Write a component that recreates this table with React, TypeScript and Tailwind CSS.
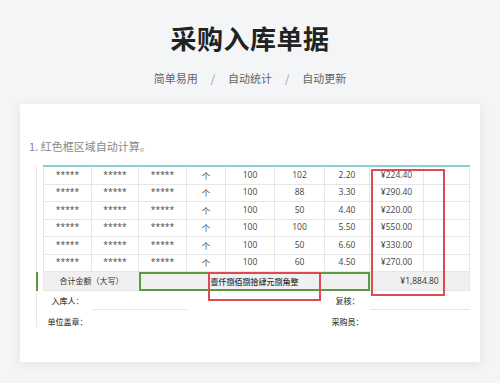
const GRID = 'grid grid-cols-[49px_47px_48px_39px_49px_50px_45px_54px_46px]'

const ROWS: { qty: string; price: string; amount: string }[] = [
  { qty: '102', price: '2.20', amount: '¥224.40' },
  { qty: '88', price: '3.30', amount: '¥290.40' },
  { qty: '50', price: '4.40', amount: '¥220.00' },
  { qty: '100', price: '5.50', amount: '¥550.00' },
  { qty: '50', price: '6.60', amount: '¥330.00' },
  { qty: '60', price: '4.50', amount: '¥270.00' },
]

const cell = 'flex items-center justify-center border-r border-b border-[#e6e6e6] h-[17.5px]'

export default function App() {
  return (
    <div
      className="min-h-[383px] w-[500px] bg-[#f4f5f7] flex flex-col items-center"
      style={{ fontFamily: '"Open Sans", "Noto Sans CJK SC", sans-serif' }}
    >
      <h1 className="mt-[22px] text-[26px] leading-[32px] font-bold text-[#222] tracking-[0.5px]" style={{ fontFamily: '"Noto Sans CJK SC", sans-serif' }}>
        采购入库单据
      </h1>
      <div className="mt-[16px] flex items-center text-[11px] leading-[16px] text-[#666]" style={{ fontFamily: '"Noto Sans CJK SC", sans-serif' }}>
        <span>简单易用</span>
        <span className="mx-[13px] text-[#999]">/</span>
        <span>自动统计</span>
        <span className="mx-[13px] text-[#999]">/</span>
        <span>自动更新</span>
      </div>

      <div className="relative mt-[18px] w-[460px] h-[258px] bg-white shadow-[0_2px_12px_rgba(0,0,0,0.08)] pt-[35px]">
        <p className="pl-[9px] text-[11px] leading-[14px] text-[#888]" style={{ fontFamily: '"Noto Sans CJK SC", sans-serif' }}>
          1. 红色框区域自动计算。
        </p>

        <div className="mt-[12px] ml-[16px] text-[8.5px] text-[#444]">
          {ROWS.map((r, i) => (
            <div key={i} className="flex">
              <div className="w-[7px] border-l border-[#e8e8e8]" />
              <div className={`${GRID} ${i === 0 ? 'border-t-2 border-[#8dcfd0]' : ''}`}>
                <div className={`${cell} border-l`}>*****</div>
                <div className={cell}>*****</div>
                <div className={cell}>*****</div>
                <div className={cell} style={{ fontFamily: '"Noto Sans CJK SC", sans-serif' }}>个</div>
                <div className={cell}>100</div>
                <div className={cell}>{r.qty}</div>
                <div className={cell}>{r.price}</div>
                <div className={cell}>{r.amount}</div>
                <div className={cell} />
              </div>
            </div>
          ))}

          <div className="flex">
            <div className="w-[7px] border-l-2 border-[#5c9a3d]" />
            <div className={`${GRID} h-[19px] bg-[#f0f0f0] text-[#333]`}>
              <div className="col-span-2 flex items-center justify-center border-l border-b border-[#e6e6e6] text-[8px]" style={{ fontFamily: '"Noto Sans CJK SC", sans-serif' }}>
                合计金额（大写）
              </div>
              <div className="col-span-5 flex items-center justify-center border-2 border-[#5c9a3d] text-[8px] font-medium" style={{ fontFamily: '"Noto Sans CJK SC", sans-serif' }}>
                壹仟捌佰捌拾肆元捌角整
              </div>
              <div className="col-span-2 flex items-center justify-center border-r border-b border-[#e6e6e6]">¥1,884.80</div>
            </div>
          </div>

          <div className="flex text-[8px] font-medium text-[#444]" style={{ fontFamily: '"Noto Sans CJK SC", sans-serif' }}>
            <div className="w-[7px] border-l border-[#e8e8e8]" />
            <div className={`${GRID} h-[19px]`}>
              <div className="flex items-center justify-center">入库人：</div>
              <div className="col-span-2 border-b border-[#e6e6e6]" />
              <div className="col-span-3" />
              <div className="flex items-center justify-center">复核：</div>
              <div className="col-span-2 border-b border-[#e6e6e6]" />
            </div>
          </div>
          <div className="flex text-[8px] font-medium text-[#444]" style={{ fontFamily: '"Noto Sans CJK SC", sans-serif' }}>
            <div className="w-[7px] h-[17px] border-l border-[#e8e8e8]" />
            <div className={`${GRID} h-[24px]`}>
              <div className="flex items-center justify-center">单位盖章：</div>
              <div className="col-span-5" />
              <div className="flex items-center justify-center">采购员：</div>
              <div className="col-span-2" />
            </div>
          </div>
        </div>

        <div className="absolute left-[351px] top-[65px] w-[74px] h-[127px] border-2 border-[#dc4b4f]" />
        <div className="absolute left-[188px] top-[168px] w-[113px] h-[29px] border-2 border-[#dc4b4f]" />
      </div>
    </div>
  )
}
